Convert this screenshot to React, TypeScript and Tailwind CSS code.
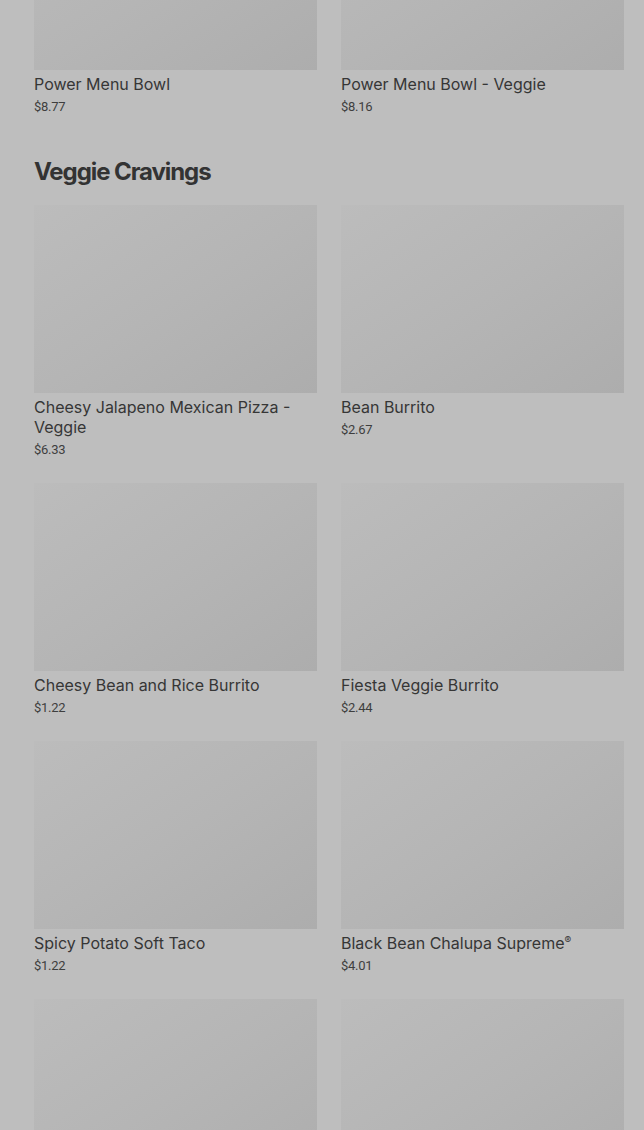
import React from 'react';

type Item = { name: string; price: string };

const topRow: Item[] = [
  { name: 'Power Menu Bowl', price: '$8.77' },
  { name: 'Power Menu Bowl - Veggie', price: '$8.16' },
];

const veggie: Item[] = [
  { name: 'Cheesy Jalapeno Mexican Pizza - Veggie', price: '$6.33' },
  { name: 'Bean Burrito', price: '$2.67' },
  { name: 'Cheesy Bean and Rice Burrito', price: '$1.22' },
  { name: 'Fiesta Veggie Burrito', price: '$2.44' },
  { name: 'Spicy Potato Soft Taco', price: '$1.22' },
  { name: 'Black Bean Chalupa Supreme®', price: '$4.01' },
  { name: 'Cheesy Roll Up', price: '$1.29' },
  { name: 'Black Bean Crunchwrap Supreme®', price: '$5.49' },
];

// ® рисуем маленьким надстрочным значком
function Name({ text }: { text: string }) {
  if (!text.endsWith('®')) return <>{text}</>;
  return (
    <>
      {text.slice(0, -1)}
      <span className="relative -top-[5px] text-[10px] leading-none">®</span>
    </>
  );
}

function Card({ item }: { item: Item }) {
  return (
    <div className="flex flex-col">
      <div className="h-[188px] w-full bg-linear-to-br from-[#bcbcbc] via-[#b5b5b5] to-[#adadad]" />
      <div
        className="mt-1 h-auto text-[16px] leading-5 text-[#363636]"
        style={{ fontFamily: 'Inter, Roboto, sans-serif' }}
      >
        <Name text={item.name} />
      </div>
      <div className="mt-1 text-[13px] leading-[18px] tracking-[-0.02em] text-[#3e3e3e]">
        {item.price}
      </div>
    </div>
  );
}

export default function App() {
  return (
    <div
      className="h-[1130px] overflow-hidden bg-[#bebebe]"
      style={{ fontFamily: 'Roboto, "Liberation Sans", sans-serif' }}
    >
      <div className="-mt-[118px] pl-[34px] pr-[20px]">
        <div className="grid grid-cols-2 gap-x-6 gap-y-[25px]">
          {topRow.map(it => (
            <Card key={it.name} item={it} />
          ))}
        </div>

        {/* секция */}
        <h2
          className="mt-10 mb-[17px] text-[24px] font-bold leading-8 tracking-[-0.045em] text-[#333333]"
          style={{ fontFamily: 'Inter, Roboto, sans-serif' }}
        >
          Veggie Cravings
        </h2>
        <div className="grid grid-cols-2 gap-x-6 gap-y-[24px]">
          {veggie.map(it => (
            <Card key={it.name} item={it} />
          ))}
        </div>
      </div>
    </div>
  );
}
